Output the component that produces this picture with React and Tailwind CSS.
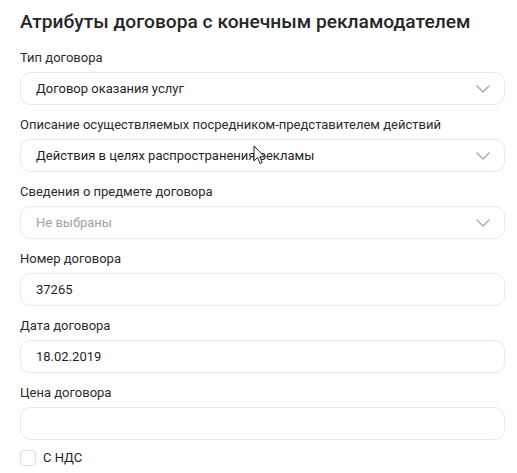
import React from "react";

function Chevron() {
  return (
    <svg width="14" height="8" viewBox="0 0 14 8" fill="none" className="shrink-0">
      <path d="M1 1l6 6 6-6" stroke="#a3a7b0" strokeWidth="1.4" strokeLinecap="round" strokeLinejoin="round" />
    </svg>
  );
}

function Field({ label, value, placeholder, select }) {
  return (
    <div className="flex flex-col mb-3">
      <div className="text-[13px] leading-4 text-[#2b2b2b] mb-[6px]">{label}</div>
      <div className="h-[33px] rounded-[10px] border border-[#e9e9ee] bg-white flex items-center pl-[15px] pr-[14px]">
        <div className={"flex-1 text-[13px] " + (value ? "text-[#1f1f1f]" : "text-[#9ea1a8]")}>
          {value || placeholder || ""}
        </div>
        {select && <Chevron />}
      </div>
    </div>
  );
}

export default function App() {
  return (
    <div
      className="relative w-[517px] h-[473px] bg-white overflow-hidden pl-5 pr-3 pt-[10px]"
      style={{ fontFamily: "Roboto, 'Noto Sans', sans-serif" }}
    >
      <div className="text-[19.2px] leading-6 font-medium text-[#262626] mb-4">
        Атрибуты договора с конечным рекламодателем
      </div>
      <Field label="Тип договора" value="Договор оказания услуг" select />
      <Field label="Описание осуществляемых посредником-представителем действий" value="Действия в целях распространения рекламы" select />
      <Field label="Сведения о предмете договора" placeholder="Не выбраны" select />
      <Field label="Номер договора" value="37265" />
      <Field label="Дата договора" value="18.02.2019" />
      <div className="flex flex-col">
        <div className="text-[13px] leading-4 text-[#2b2b2b] mb-[6px]">Цена договора</div>
        <div className="h-[33px] rounded-[10px] border border-[#e9e9ee] bg-white" />
      </div>
      <div className="flex items-center gap-[7px] mt-2">
        <div className="w-4 h-4 rounded-[4px] border border-[#dcdde2] bg-white" />
        <div className="text-[13px] text-[#1f1f1f]">С НДС</div>
      </div>
      <svg className="absolute left-[253px] top-[145px]" width="13" height="20" viewBox="0 0 13 20">
        <path d="M1 1 L1 16 L4.5 12.5 L7 18.5 L9.2 17.6 L6.8 11.8 L11.5 11.8 Z" fill="white" stroke="#222" strokeWidth="1" strokeLinejoin="round" />
      </svg>
    </div>
  );
}
